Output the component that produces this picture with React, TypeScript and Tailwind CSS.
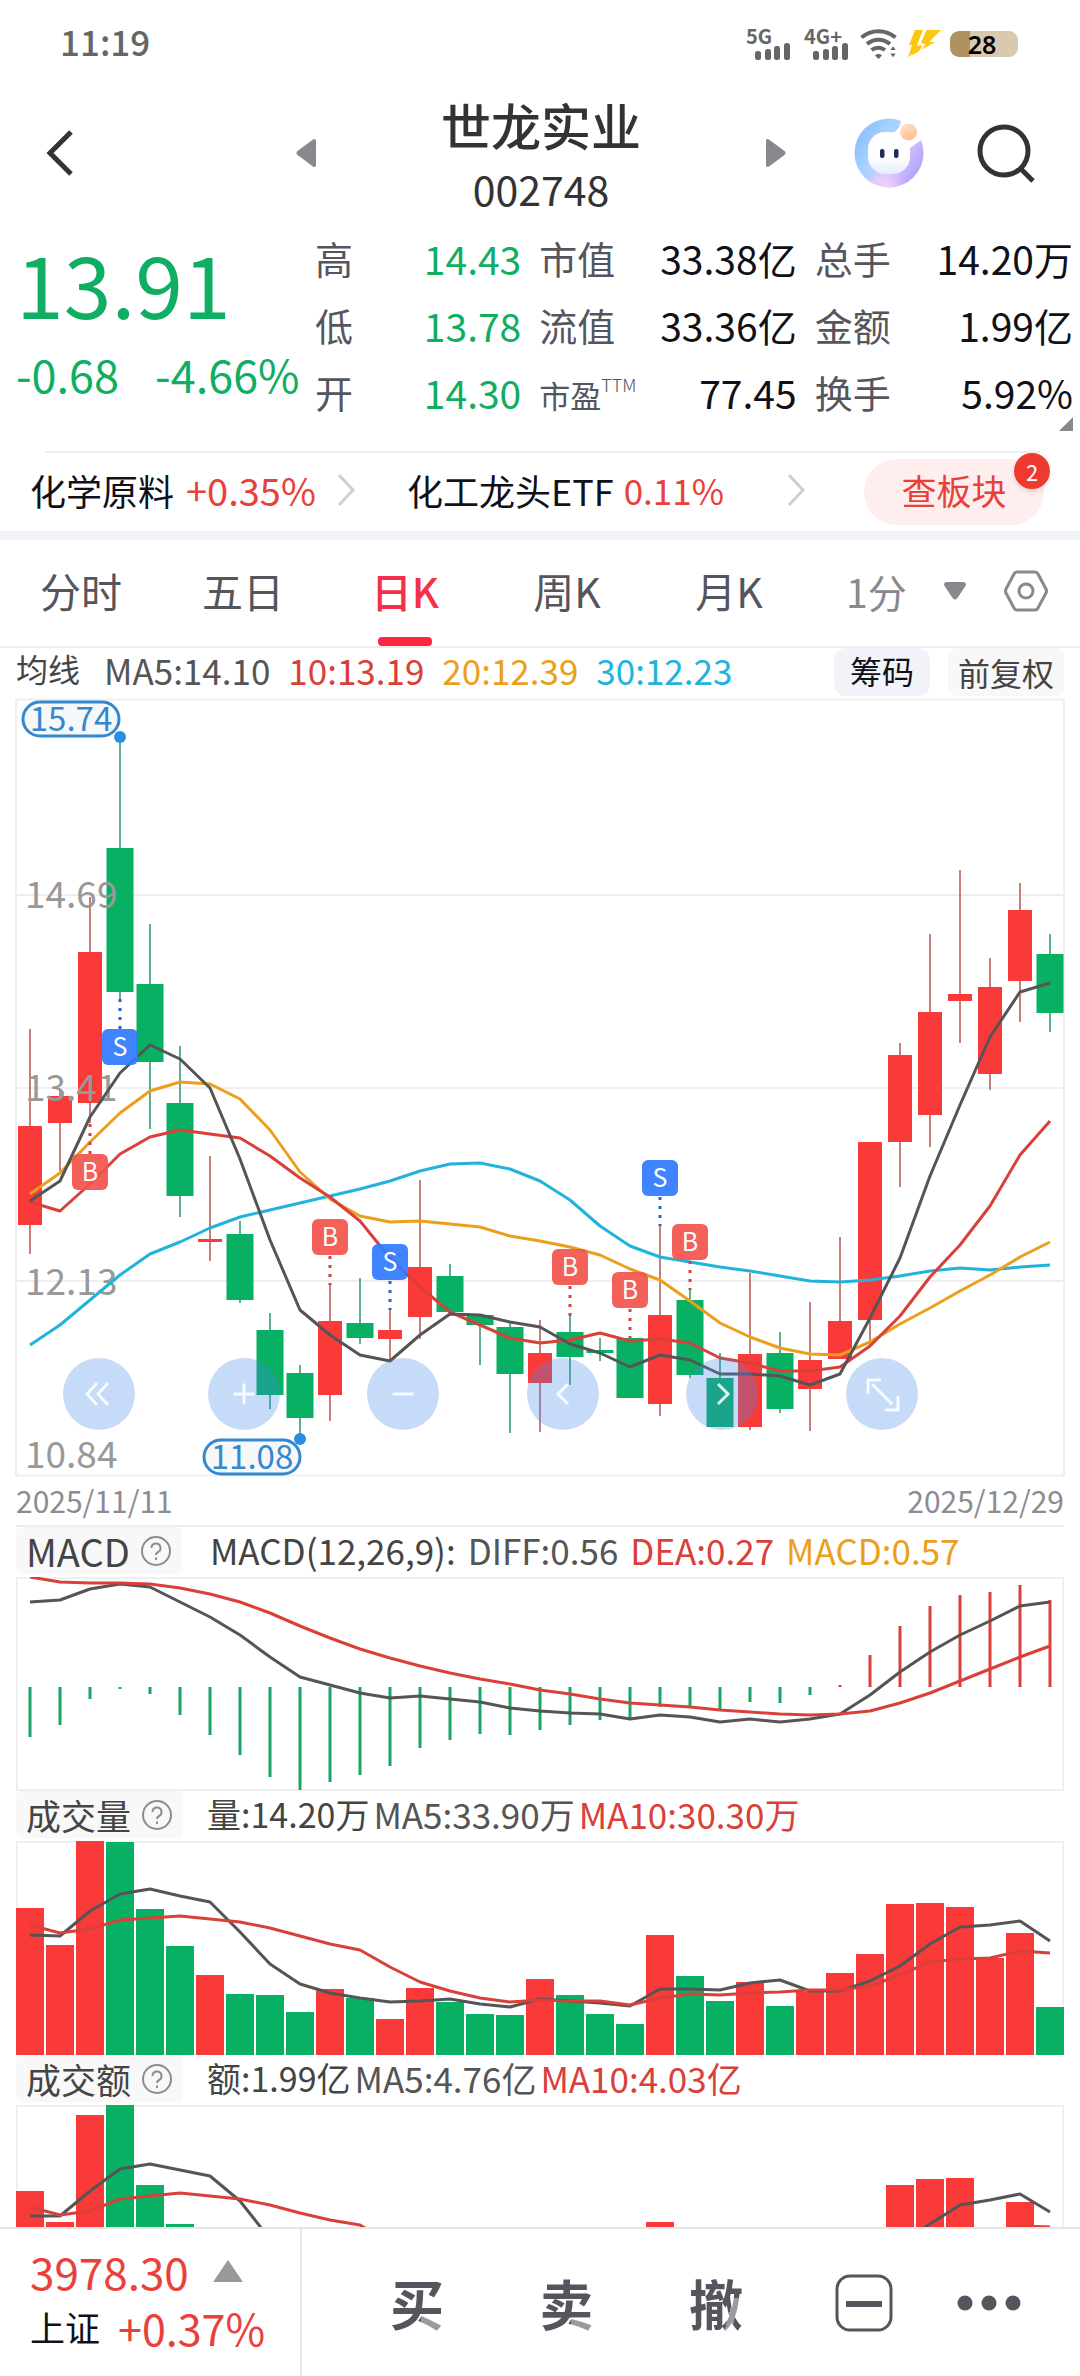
import React, { useState } from "react";

type Candle = {
  up: boolean;
  high: number;
  top: number;
  bottom: number;
  low: number;
};

const STEP = 30;
const xAt = (i: number) => 14 + i * STEP;

const RED = "#fa3a38";
const GREEN = "#07b062";
const GRID = "#efefef";
const DARK = "#555555";
const LINE_RED = "#d9403a";
const ORANGE = "#eb9f1c";
const CYAN = "#22b3dc";

// [up, high, body top, body bottom, low]
const rawCandles: [number, number, number, number, number][] = [
  [1, 330, 427, 526, 555],
  [1, 392, 397, 424, 472],
  [1, 198, 253, 404, 424],
  [0, 43, 149, 293, 300],
  [0, 225, 285, 363, 430],
  [0, 347, 404, 497, 518],
  [1, 457, 540, 543, 562],
  [0, 522, 535, 601, 604],
  [0, 614, 631, 696, 710],
  [0, 666, 674, 719, 740],
  [1, 586, 622, 696, 722],
  [0, 579, 624, 639, 645],
  [1, 611, 631, 640, 661],
  [1, 481, 568, 618, 640],
  [0, 565, 577, 613, 613],
  [0, 615, 616, 626, 666],
  [0, 623, 628, 675, 734],
  [1, 621, 654, 684, 733],
  [0, 617, 633, 658, 686],
  [0, 639, 651, 654, 662],
  [0, 639, 639, 699, 699],
  [1, 527, 616, 705, 717],
  [0, 591, 601, 676, 679],
  [0, 654, 679, 728, 728],
  [1, 574, 655, 728, 731],
  [0, 633, 654, 710, 714],
  [1, 603, 661, 690, 732],
  [1, 538, 622, 660, 660],
  [1, 443, 443, 621, 646],
  [1, 344, 356, 443, 488],
  [1, 235, 313, 416, 448],
  [1, 171, 295, 302, 344],
  [1, 259, 288, 375, 391],
  [1, 184, 211, 282, 323],
  [0, 235, 255, 314, 333],
];

const candles: Candle[] = rawCandles.map(([up, high, top, bottom, low]) => ({
  up: up === 1,
  high,
  top,
  bottom,
  low,
}));

const ma5 = [
  502, 482, 418, 374, 346, 360, 389, 460, 541, 611, 636, 656, 662, 636, 615, 616,
  623, 628, 645, 654, 668, 656, 661, 675, 675, 677, 686, 675, 619, 559, 477, 406,
  338, 293, 284,
];
const ma10 = [
  503, 512, 485, 455, 438, 431, 435, 439, 457, 479, 498, 522, 559, 588, 613, 626,
  639, 644, 641, 634, 642, 640, 644, 659, 664, 672, 672, 668, 647, 617, 578, 546,
  507, 456, 422,
];
const ma20 = [
  495, 474, 443, 414, 392, 383, 385, 400, 431, 473, 500, 517, 523, 522, 525, 528,
  537, 542, 548, 556, 570, 581, 602, 624, 638, 649, 655, 656, 643, 625, 609, 592,
  576, 558, 543,
];
const ma30 = [
  646, 626, 601, 576, 555, 543, 529, 518, 511, 504, 497, 490, 482, 472, 465, 464,
  470, 482, 501, 527, 547, 558, 563, 568, 572, 577, 582, 583, 581, 577, 572, 569,
  571, 568, 566,
];

const macdBars = [
  160, 148, 122, 112, 117, 138, 158, 178, 200, 213, 205, 198, 189, 171, 163, 157,
  158, 153, 148, 143, 141, 130, 129, 132, 125, 126, 118, 108, 78, 49, 29, 18, 15,
  8, 23,
];
const diff = [
  25, 23, 12, 7, 10, 25, 40, 58, 80, 100, 108, 116, 121, 119, 122, 125, 131, 134,
  136, 137, 142, 138, 140, 145, 142, 145, 142, 137, 118, 95, 75, 58, 44, 29, 25,
];
const dea = [
  0, 5, 6, 6, 7, 11, 17, 25, 36, 49, 61, 72, 81, 89, 96, 102, 107, 113, 117, 122,
  126, 128, 130, 133, 135, 137, 138, 137, 134, 126, 116, 104, 92, 80, 69,
];

const volume = [
  67, 104, 0, 1, 68, 105, 134, 153, 154, 171, 148, 157, 178, 147, 161, 173, 174,
  138, 154, 173, 183, 94, 135, 160, 141, 165, 151, 132, 113, 63, 62, 66, 117, 92,
  166,
];
const volMa5 = [
  94, 95, 70, 53, 48, 55, 61, 91, 123, 143, 152, 157, 161, 160, 158, 163, 166,
  158, 160, 162, 165, 148, 148, 149, 142, 139, 150, 150, 140, 125, 103, 86, 84,
  80, 100,
];
const volMa10 = [
  84, 92, 88, 79, 77, 75, 78, 81, 87, 95, 103, 109, 126, 141, 150, 157, 161, 159,
  160, 160, 164, 157, 153, 154, 152, 151, 149, 149, 145, 134, 121, 118, 117, 110,
  112,
];

const amount = [
  86, 117, 10, 0, 80, 119, 142, 160, 162, 176, 156, 164, 182, 156, 168, 178, 180,
  150, 162, 178, 187, 117, 146, 166, 150, 170, 158, 144, 128, 80, 74, 73, 123, 97,
  172,
];
const amtMa5 = [
  111, 111, 86, 64, 59, 65, 71, 96, 134, 152, 160, 165, 168, 167, 166, 170, 172,
  165, 167, 169, 171, 156, 156, 157, 150, 148, 158, 158, 150, 138, 119, 100, 95,
  89, 107,
];
const amtMa10 = [
  102, 110, 106, 94, 91, 88, 91, 94, 100, 108, 115, 120, 138, 152, 160, 166, 169,
  167, 168, 168, 171, 165, 161, 162, 160, 159, 158, 158, 154, 145, 133, 130, 128,
  121, 122,
];

const markers = [
  { i: 2, kind: "B", y: 455, from: 425, to: 455 },
  { i: 3, kind: "S", y: 330, from: 300, to: 330 },
  { i: 10, kind: "B", y: 520, from: 557, to: 586 },
  { i: 12, kind: "S", y: 545, from: 582, to: 611 },
  { i: 18, kind: "B", y: 550, from: 587, to: 617 },
  { i: 20, kind: "B", y: 573, from: 610, to: 639 },
  { i: 21, kind: "S", y: 461, from: 498, to: 527 },
  { i: 22, kind: "B", y: 525, from: 562, to: 591 },
];

const quotes = [
  { label: "高", value: "14.43", green: true },
  { label: "市值", value: "33.38亿" },
  { label: "总手", value: "14.20万" },
  { label: "低", value: "13.78", green: true },
  { label: "流值", value: "33.36亿" },
  { label: "金额", value: "1.99亿" },
  { label: "开", value: "14.30", green: true },
  { label: "市盈", sup: "TTM", value: "77.45" },
  { label: "换手", value: "5.92%" },
];

const tabs = ["分时", "五日", "日K", "周K", "月K"];

const points = (ys: number[]) => ys.map((y, i) => `${xAt(i)},${y}`).join(" ");

function Line({ ys, color }: { ys: number[]; color: string }) {
  return (
    <polyline
      points={points(ys)}
      fill="none"
      stroke={color}
      strokeWidth={3}
      strokeLinejoin="round"
    />
  );
}

function PriceTag({ x, y, text }: { x: number; y: number; text: string }) {
  return (
    <g>
      <rect
        x={x}
        y={y}
        width={96}
        height={34}
        rx={17}
        fill="#f6f8fa"
        stroke="#3388d0"
        strokeWidth={3}
      />
      <text x={x + 48} y={y + 29} textAnchor="middle" fontSize={33} fill="#3388d0">
        {text}
      </text>
    </g>
  );
}

function PriceChart() {
  return (
    <svg viewBox="0 0 1048 777" className="block w-full overflow-visible" role="img" aria-label="日K">
      <rect x={0} y={0.5} width={1048} height={776} fill="none" stroke={GRID} strokeWidth={2} />
      {[196, 389, 582].map((y) => (
        <line key={y} x1={0} x2={1048} y1={y} y2={y} stroke={GRID} strokeWidth={2} />
      ))}

      {candles.map((c, i) => {
        const width = c.up ? 24 : 27;
        return (
          <g key={i}>
            <line
              x1={xAt(i)}
              x2={xAt(i)}
              y1={c.high}
              y2={c.low}
              stroke={c.up ? "#c77f7d" : "#5fae8c"}
              strokeWidth={2}
            />
            <rect
              x={xAt(i) - width / 2}
              y={c.top}
              width={width}
              height={c.bottom - c.top}
              fill={c.up ? RED : GREEN}
            />
          </g>
        );
      })}

      <g fontSize={37} fill="#999999">
        <text x={9} y={209}>14.69</text>
        <text x={9} y={402}>13.41</text>
        <text x={9} y={596}>12.13</text>
        <text x={9} y={769}>10.84</text>
      </g>

      <Line ys={ma30} color={CYAN} />
      <Line ys={ma20} color={ORANGE} />
      <Line ys={ma10} color={LINE_RED} />
      <Line ys={ma5} color={DARK} />

      {markers.map((m) => (
        <g key={m.i}>
          <line
            x1={xAt(m.i)}
            x2={xAt(m.i)}
            y1={m.from}
            y2={m.to}
            stroke={m.kind === "B" ? "#d9403a" : "#2563d0"}
            strokeWidth={3}
            strokeDasharray="3 6"
          />
          <rect
            x={xAt(m.i) - 18}
            y={m.y}
            width={36}
            height={36}
            rx={6}
            fill={m.kind === "B" ? "#f2544c" : "#3079ff"}
            fillOpacity={0.92}
          />
          <text x={xAt(m.i)} y={m.y + 27} textAnchor="middle" fontSize={25} fill="#ffffff">
            {m.kind}
          </text>
        </g>
      ))}

      <PriceTag x={7} y={3} text="15.74" />
      <circle cx={104} cy={38} r={6} fill="#2b8ee0" />
      <PriceTag x={188} y={741} text="11.08" />
      <circle cx={284} cy={740} r={6} fill="#2b8ee0" />
    </svg>
  );
}

function MacdChart() {
  return (
    <svg viewBox="0 0 1048 214" className="block w-full" role="img" aria-label="MACD">
      <rect x={1} y={1} width={1046} height={212} fill="none" stroke={GRID} strokeWidth={2} />
      {macdBars.map((y, i) => (
        <line
          key={i}
          x1={xAt(i)}
          x2={xAt(i)}
          y1={110}
          y2={y}
          stroke={y > 110 ? "#1aa566" : LINE_RED}
          strokeWidth={3}
        />
      ))}
      <Line ys={diff} color={DARK} />
      <Line ys={dea} color={LINE_RED} />
    </svg>
  );
}

function BarChart({ bars, fast, slow, label }: { bars: number[]; fast: number[]; slow: number[]; label: string }) {
  return (
    <svg viewBox="0 0 1048 214" className="block w-full" role="img" aria-label={label}>
      <rect x={1} y={1} width={1046} height={212} fill="none" stroke={GRID} strokeWidth={2} />
      {bars.map((y, i) => (
        <rect
          key={i}
          x={xAt(i) - 14}
          y={y}
          width={28}
          height={214 - y}
          fill={candles[i].up ? RED : GREEN}
        />
      ))}
      <Line ys={fast} color={DARK} />
      <Line ys={slow} color={LINE_RED} />
    </svg>
  );
}

function IndicatorHeader({ name, children }: { name: React.ReactNode; children: React.ReactNode }) {
  return (
    <div className="flex h-[50px] items-start text-[35px] leading-[46px] whitespace-nowrap text-[#444]">
      <button className="flex h-[47px] items-center gap-2.5 rounded-md bg-[#f8f8f8] px-2.5">
        {name}
        <svg viewBox="0 0 32 32" className="size-8" fill="none" stroke="#8b8b91" strokeWidth={2}>
          <circle cx={16} cy={16} r={14} />
          <path d="M11.500 13a4.500 4.500 0 1 1 6.500 4c-1.500 .8-2 1.600-2 3" />
          <path d="M16 22.500v2.500" />
        </svg>
      </button>
      {children}
    </div>
  );
}

function Chevron() {
  return (
    <svg viewBox="0 0 20 34" className="h-[34px] w-5" fill="none" stroke="#cfcfd2" strokeWidth={3}>
      <path d="M3 2l14 15L3 32" />
    </svg>
  );
}

function Signal({ label }: { label: string }) {
  return (
    <div className="flex flex-col">
      <span className="text-[20px] leading-[15px] font-bold">{label}</span>
      <svg viewBox="0 0 36 17" className="ml-[9px] h-[17px] w-9" fill="#666666">
        <rect x={0} y={8} width={6} height={9} rx={2.5} />
        <rect x={10} y={6} width={6} height={11} rx={2.5} />
        <rect x={19} y={3} width={6} height={14} rx={2.5} />
        <rect x={29} y={0} width={6} height={17} rx={2.5} />
      </svg>
    </div>
  );
}

function StatusBar() {
  return (
    <div className="flex h-20 items-center justify-between pr-[62px] pl-[60px] text-[#666]">
      <span className="text-[35px] leading-none font-medium">11:19</span>
      <div className="flex items-center pt-2">
        <div className="w-[58px]">
          <Signal label="5G" />
        </div>
        <div className="w-[56px]">
          <Signal label="4G+" />
        </div>
        <svg viewBox="0 0 38 30" className="h-[30px] w-[38px]" fill="none" stroke="#666666">
          <path d="M1.500 8.500a26 26 0 0 1 34 0" strokeWidth={4} />
          <path d="M7 15a17.500 17.500 0 0 1 23 0" strokeWidth={4} />
          <path d="M11.500 21a11 11 0 0 1 13.500 0" strokeWidth={4} />
          <path d="M15 26.500a5 5 0 0 1 7 0L18.500 30z" fill="#666666" stroke="none" />
          <path d="M33 16.500l3.500 5h-7zM33 29l3.500-5h-7z" fill="#666666" stroke="#ffffff" strokeWidth={1} />
        </svg>
        <svg viewBox="0 0 34 28" className="ml-2.5 h-7 w-[34px]" fill="#fcc70e">
          <path d="M7 0h8l-5.500 14h6L0 27.500 4 15H1z" />
          <path d="M18.500 0H33L21 12h6L3 26l8.500-11.500H18l-5-2z" />
          <path d="M16.500 0L10 15h6l-6 9" fill="none" stroke="#ffffff" strokeWidth={1.5} />
        </svg>
        <span className="ml-2 flex h-[26px] w-[68px] items-center justify-center rounded-[9px] bg-linear-to-r from-[#b09262] from-29% to-[#d9c9b1] to-29% pr-1 font-['Noto_Sans'] text-[25px] leading-none font-semibold text-black">
          28
        </span>
      </div>
    </div>
  );
}

function Robot() {
  return (
    <svg viewBox="0 0 70 70" className="size-[70px]">
      <defs>
        <linearGradient id="ring" x1="0" y1="0.2" x2="1" y2="0.8">
          <stop offset="0" stopColor="#86bdff" />
          <stop offset="0.35" stopColor="#a9d2ff" />
          <stop offset="0.6" stopColor="#d4c8fb" />
          <stop offset="1" stopColor="#b09cff" />
        </linearGradient>
        <radialGradient id="pink" cx="0.45" cy="1" r="0.3">
          <stop offset="0" stopColor="#f6cff5" />
          <stop offset="1" stopColor="#f6cff5" stopOpacity="0" />
        </radialGradient>
        <linearGradient id="ball" x1="0" y1="0" x2="0.6" y2="1">
          <stop offset="0" stopColor="#ffe6d2" />
          <stop offset="1" stopColor="#ffbe8c" />
        </linearGradient>
        <linearGradient id="face" x1="0" y1="0" x2="0" y2="1">
          <stop offset="0.6" stopColor="#ffffff" />
          <stop offset="1" stopColor="#e6ecfd" />
        </linearGradient>
      </defs>
      <circle cx="35" cy="35" r="34.500" fill="url(#ring)" />
      <circle cx="35" cy="35" r="34.500" fill="url(#pink)" />
      <path d="M48 0L40 14l16 16 14-10V0z" fill="#ffffff" />
      <path d="M47 3c-1 6-4 10-9 12l-8-9z" fill="#a9d2ff" />
      <rect x="14" y="14" width="42" height="42" rx="17" fill="url(#face)" />
      <circle cx="54.500" cy="14" r="8.500" fill="url(#ball)" />
      <rect x="26" y="31" width="4.500" height="9" rx="2" fill="#1d2f58" />
      <rect x="40" y="31" width="4.500" height="9" rx="2" fill="#1d2f58" />
    </svg>
  );
}

function Header() {
  return (
    <header className="flex h-[146px] items-center pr-11 pl-11 text-[#333]">
      <button aria-label="返回" className="w-[252px]">
        <svg viewBox="0 0 30 46" className="h-[46px] w-[30px]" fill="none" stroke="#333333" strokeWidth={5}>
          <path d="M27 2L6 23l21 21" />
        </svg>
      </button>
      <button aria-label="上一只">
        <svg viewBox="0 0 20 28" className="h-7 w-5" fill="#88888f">
          <path d="M20 2v24q0 3-3 1.500L1.500 16q-2-2 0-4L17 .5Q20-1 20 2z" />
        </svg>
      </button>
      <div className="flex-1 pt-1.5 text-center">
        <h1 className="text-[50px] leading-16 font-medium">世龙实业</h1>
        <div className="text-[41px] leading-16">002748</div>
      </div>
      <button aria-label="下一只">
        <svg viewBox="0 0 20 28" className="h-7 w-5" fill="#88888f">
          <path d="M0 2v24q0 3 3 1.500L18.500 16q2-2 0-4L3 .5Q0-1 0 2z" />
        </svg>
      </button>
      <button aria-label="助手" className="ml-[68px]">
        <Robot />
      </button>
      <button aria-label="搜索" className="ml-[52px]">
        <svg viewBox="0 0 60 60" className="size-[60px]" fill="none" stroke="#333333" strokeWidth={5}>
          <circle cx={28} cy={28} r={24} />
          <path d="M44 45l13 13" />
        </svg>
      </button>
    </header>
  );
}

function Quote() {
  return (
    <section className="relative flex h-[225px] pr-[7px] whitespace-nowrap">
      <div className="w-[315px] shrink-0 pt-2 pl-4 text-[#0fae62]">
        <div className="text-[86px] leading-24">13.91</div>
        <div className="mt-3.5 flex gap-9 text-[45px] leading-[60px]">
          <span>-0.68</span>
          <span>-4.66%</span>
        </div>
      </div>
      <dl className="grid flex-1 grid-cols-[206fr_257fr_258fr] content-start gap-x-[18px]">
        {quotes.map((q) => (
          <div key={q.label} className="flex h-[67px] justify-between text-[39px] leading-16">
            <dt className="text-[38px] text-[#55565d]">
              {q.sup ? (
                <span className="text-[31px]">
                  {q.label}
                  <sup className="-top-4 text-[18px] leading-none font-light">{q.sup}</sup>
                </span>
              ) : (
                q.label
              )}
            </dt>
            <dd className={q.green ? "text-[#0fae62]" : "text-[#101018]"}>{q.value}</dd>
          </div>
        ))}
      </dl>
      <svg viewBox="0 0 14 14" className="absolute right-[7px] bottom-5 size-3.5" fill="#88888f">
        <path d="M14 0v14H0z" />
      </svg>
    </section>
  );
}

function Sectors() {
  return (
    <section className="whitespace-nowrap">
      <div className="mr-10 ml-[45px] h-0.5 bg-[#eeeeee]" />
      <div className="flex h-[78px] items-center pr-9 pl-[30px] text-[36px] leading-[50px] text-[#101018]">
        <a href="#chemical" className="flex w-[377px] items-center pb-1">
          <span>化学原料</span>
          <span className="mr-5 ml-3 text-[38px] text-[#e8413a]">+0.35%</span>
          <Chevron />
        </a>
        <a href="#etf" className="flex flex-1 items-center pb-1">
          <span>化工龙头ETF</span>
          <span className="ml-2.5 text-[35px] text-[#e8413a]">0.11%</span>
          <span className="mr-[58px] ml-auto">
            <Chevron />
          </span>
        </a>
        <button className="relative h-[66px] w-[180px] rounded-full bg-[#ffeeee] pb-1 text-[35px] text-[#e8413a]">
          查板块
          <span className="absolute -top-1.5 -right-1.5 flex size-9 items-center justify-center rounded-full bg-[#ee3a30] text-[22px] text-white shadow-md">
            2
          </span>
        </button>
      </div>
      <div className="h-[9px] bg-[#f2f3f8]" />
    </section>
  );
}

function Periods() {
  const [active, setActive] = useState("日K");

  return (
    <nav className="flex h-[108px] border-b-2 border-[#eeeeee] text-[41px] text-[#55565d]">
      {tabs.map((t) => (
        <button
          key={t}
          onClick={() => setActive(t)}
          className={
            t === active
              ? "relative w-[15%] pb-1 font-medium text-[#f5304a]"
              : "relative w-[15%] pb-1"
          }
        >
          {t}
          {t === active && (
            <span className="absolute bottom-0 left-1/2 h-[9px] w-[54px] -translate-x-1/2 rounded-sm bg-[#ff2640]" />
          )}
        </button>
      ))}
      <div className="ml-9 flex flex-1 items-center justify-between pr-8 pb-1 text-[#88888f]">
        <label className="relative flex items-center">
          <select aria-label="分钟" defaultValue="1" className="w-[120px] appearance-none bg-transparent text-[39px]">
            <option value="1">1分</option>
            <option value="5">5分</option>
          </select>
          <svg viewBox="0 0 22 18" className="pointer-events-none absolute right-0 h-[18px] w-[22px]" fill="#88888f">
            <path d="M2 0h18q3 1 1.500 4L13 16.500q-2 2-4 0L.5 4Q-1 1 2 0z" />
          </svg>
        </label>
        <button aria-label="设置">
          <svg viewBox="0 0 44 42" className="h-[42px] w-11" fill="none" stroke="#88888f" strokeWidth={3}>
            <path d="M13 2h18q2 0 3 2l8 15q1 2 0 4l-8 15q-1 2-3 2H13q-2 0-3-2L2 23q-1-2 0-4l8-15q1-2 3-2z" />
            <circle cx={22} cy={21} r={7} />
          </svg>
        </button>
      </div>
    </nav>
  );
}

const zoomButtons = [
  { label: "最早", left: "left-[4.5%]", d: "M34 25L24 36l10 11M45 25L35 36l10 11" },
  { label: "放大", left: "left-[18.3%]", d: "M36 25.500v21M25.500 36h21" },
  { label: "缩小", left: "left-[33.5%]", d: "M25.500 36h21" },
  { label: "向左", left: "left-[48.8%]", d: "M41 26L31 36l10 10" },
  { label: "向右", left: "left-[63.9%]", d: "M32 26l10 10-10 10" },
  { label: "全屏", left: "left-[79.2%]", d: "M35 22H22v14M39 52h13V38M26 26l20 20" },
];

function Footer() {
  const glyph =
    "bg-[#55565d] bg-[linear-gradient(#9a9a9f,#9a9a9f)] bg-[length:23px_15px] bg-right-bottom bg-no-repeat bg-clip-text text-[54px] leading-[58px] font-bold text-transparent";

  return (
    <footer className="flex h-[149px] shrink-0 border-t-2 border-[#e5e5e5] bg-white whitespace-nowrap">
      <a href="#index" className="w-[302px] border-r-2 border-[#e5e5e5] pt-3.5 pl-[30px] text-[#e8413a]">
        <div className="flex items-center gap-6 text-[44px] leading-14">
          3978.30
          <svg viewBox="0 0 30 22" className="h-[22px] w-[30px]" fill="#999999">
            <path d="M15 0l15 22H0z" />
          </svg>
        </div>
        <div className="flex items-center gap-[18px] text-[43px] leading-14">
          <span className="text-[35px] text-[#101018]">上证</span>
          +0.37%
        </div>
      </a>
      <div className="flex flex-1 items-center justify-between pr-[58px] pl-[88px]">
        <button className={glyph}>买</button>
        <button className={"ml-12 " + glyph}>卖</button>
        <button className="ml-12 bg-[#55565d] bg-[linear-gradient(105deg,transparent_46%,#9a9a9f_46%_66%,transparent_66%)] bg-[length:26px_34px] bg-right-bottom bg-no-repeat bg-clip-text text-[54px] leading-[58px] font-bold text-transparent">
          撤
        </button>
        <button aria-label="收起" className="ml-11">
          <svg viewBox="0 0 58 58" className="size-[58px]" fill="none" stroke="#55565d" strokeWidth={3}>
            <rect x={2} y={2} width={54} height={54} rx={13} />
            <path d="M11 30h36" strokeWidth={6} />
          </svg>
        </button>
        <button aria-label="更多" className="ml-4">
          <svg viewBox="0 0 66 16" className="h-4 w-[66px]" fill="#55565d">
            <circle cx={9} cy={8} r={7.5} />
            <circle cx={33} cy={8} r={7.5} />
            <circle cx={57} cy={8} r={7.5} />
          </svg>
        </button>
      </div>
    </footer>
  );
}

export default function App() {
  return (
    <div className="flex h-screen flex-col overflow-hidden bg-white font-['Noto_Sans_CJK_SC',sans-serif]">
      <main className="min-h-0 flex-1 overflow-hidden">
        <StatusBar />
        <Header />
        <Quote />
        <Sectors />
        <Periods />

        {/* Candles */}
        <div className="mx-4">
          <div className="flex h-[51px] items-start gap-[18px] text-[35px] leading-11 whitespace-nowrap">
            <button className="mr-1.5 text-[32px] leading-10 text-[#444]">均线</button>
            <span className="text-[#555]">MA5:14.10</span>
            <span className="text-[#d9403a]">10:13.19</span>
            <span className="text-[#eb9f1c]">20:12.39</span>
            <span className="text-[#22b3dc]">30:12.23</span>
            <button className="ml-auto h-12 rounded-xl bg-[#f2f3f8] px-4 pb-1 text-[32px] text-[#101018]">
              筹码
            </button>
            <button className="h-12 rounded-lg bg-[#f8f8f8] px-2.5 text-[32px] text-[#444]">
              前复权
            </button>
          </div>

          <div className="relative">
            <PriceChart />
            {zoomButtons.map((b) => (
              <button
                key={b.label}
                aria-label={b.label}
                className={"absolute bottom-[46px] size-[72px] rounded-full bg-[#468ce9]/31 " + b.left}
              >
                <svg viewBox="0 0 72 72" fill="none" stroke="#ffffff" strokeOpacity={0.85} strokeWidth={3}>
                  <path d={b.d} />
                </svg>
              </button>
            ))}
          </div>

          <div className="flex h-[51px] items-center justify-between border-b-2 border-[#eeeeee] text-[30px] text-[#8b8b91]">
            <span>2025/11/11</span>
            <span>2025/12/29</span>
          </div>

          <IndicatorHeader name={<span className="text-[38px]">MACD</span>}>
            <span className="ml-7">MACD(12,26,9):</span>
            <span className="ml-3 text-[#555]">DIFF:0.56</span>
            <span className="ml-3 text-[#d9403a]">DEA:0.27</span>
            <span className="ml-3 text-[#eb9f1c]">MACD:0.57</span>
          </IndicatorHeader>
          <MacdChart />

          <IndicatorHeader name="成交量">
            <span className="ml-6 text-[34px]">量:14.20万</span>
            <span className="ml-1 text-[#555]">MA5:33.90万</span>
            <span className="ml-1 text-[#d9403a]">MA10:30.30万</span>
          </IndicatorHeader>
          <BarChart bars={volume} fast={volMa5} slow={volMa10} label="成交量" />

          <IndicatorHeader name="成交额">
            <span className="ml-6 text-[34px]">额:1.99亿</span>
            <span className="ml-1 text-[#555]">MA5:4.76亿</span>
            <span className="ml-1 text-[#d9403a]">MA10:4.03亿</span>
          </IndicatorHeader>
          <BarChart bars={amount} fast={amtMa5} slow={amtMa10} label="成交额" />
        </div>
      </main>
      <Footer />
    </div>
  );
}
